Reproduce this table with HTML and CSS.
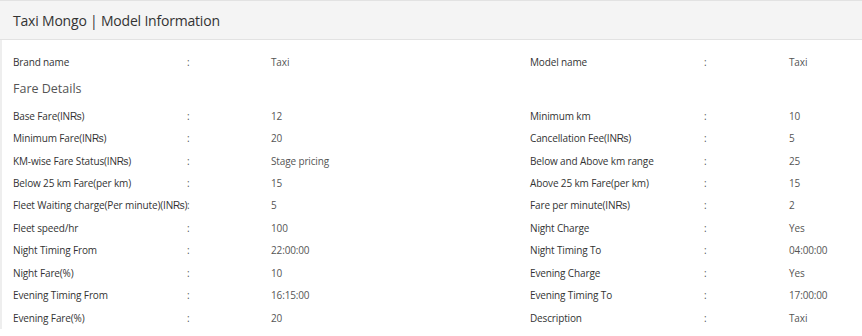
FILE: index.html
```html
<!DOCTYPE html>
<html>
<head>
<meta charset="utf-8">
<link rel="stylesheet" href="styles.css">
</head>
<body>
<div class="panel">
  <div class="panel-head"><h1 class="title">Taxi Mongo | Model Information</h1></div>
  <div class="panel-body">
    <div class="grid">
      <div class="lbl">Brand name</div><div class="col">:</div><div class="val">Taxi</div>
      <div class="lbl">Model name</div><div class="col">:</div><div class="val">Taxi</div>
    </div>
    <h2 class="section">Fare Details</h2>
    <div class="grid">
      <div class="lbl">Base Fare(IN₨)</div><div class="col">:</div><div class="val">12</div>
      <div class="lbl">Minimum km</div><div class="col">:</div><div class="val">10</div>
      <div class="lbl">Minimum Fare(IN₨)</div><div class="col">:</div><div class="val">20</div>
      <div class="lbl">Cancellation Fee(IN₨)</div><div class="col">:</div><div class="val">5</div>
      <div class="lbl">KM-wise Fare Status(IN₨)</div><div class="col">:</div><div class="val">Stage pricing</div>
      <div class="lbl">Below and Above km range</div><div class="col">:</div><div class="val">25</div>
      <div class="lbl">Below 25 km Fare(per km)</div><div class="col">:</div><div class="val">15</div>
      <div class="lbl">Above 25 km Fare(per km)</div><div class="col">:</div><div class="val">15</div>
      <div class="lbl">Fleet Waiting charge(Per minute)(IN₨)</div><div class="col">:</div><div class="val">5</div>
      <div class="lbl">Fare per minute(IN₨)</div><div class="col">:</div><div class="val">2</div>
      <div class="lbl">Fleet speed/hr</div><div class="col">:</div><div class="val">100</div>
      <div class="lbl">Night Charge</div><div class="col">:</div><div class="val">Yes</div>
      <div class="lbl">Night Timing From</div><div class="col">:</div><div class="val">22:00:00</div>
      <div class="lbl">Night Timing To</div><div class="col">:</div><div class="val">04:00:00</div>
      <div class="lbl">Night Fare(%)</div><div class="col">:</div><div class="val">10</div>
      <div class="lbl">Evening Charge</div><div class="col">:</div><div class="val">Yes</div>
      <div class="lbl">Evening Timing From</div><div class="col">:</div><div class="val">16:15:00</div>
      <div class="lbl">Evening Timing To</div><div class="col">:</div><div class="val">17:00:00</div>
      <div class="lbl">Evening Fare(%)</div><div class="col">:</div><div class="val">20</div>
      <div class="lbl">Description</div><div class="col">:</div><div class="val">Taxi</div>
    </div>
  </div>
</div>
</body>
</html>
```
FILE: styles.css
```css
html, body { margin: 0; padding: 0; background: #fff; }
body { font-family: "Open Sans", "Liberation Sans", "DejaVu Sans", sans-serif; color: #333; }
.panel { width: 862px; }
.panel-head {
  background: #f4f4f4;
  border-top: 1px solid #e2e2e2;
  border-bottom: 1px solid #e2e2e2;
  height: 38px;
  display: flex;
  align-items: center;
  padding-left: 13px;
}
.title { margin: 0; padding-top: 1px; font-size: 14px; letter-spacing: -0.2px; font-weight: 400; color: #333; }
.panel-body { border-left: 2px solid #eeeeee; padding: 11px 0 0 11px; }
.grid {
  display: grid;
  grid-template-columns: 174px 84px 259px 174px 85px 1fr;
  grid-auto-rows: 22.45px;
  align-items: center;
  font-size: 10px;
  letter-spacing: -0.14px;
}
.lbl { color: #333; white-space: nowrap; }
.col { color: #555; }
.val { color: #555; }
.section { margin: 7px 0 6px; font-size: 12.5px; font-weight: 400; color: #555; line-height: 18px; }
```
